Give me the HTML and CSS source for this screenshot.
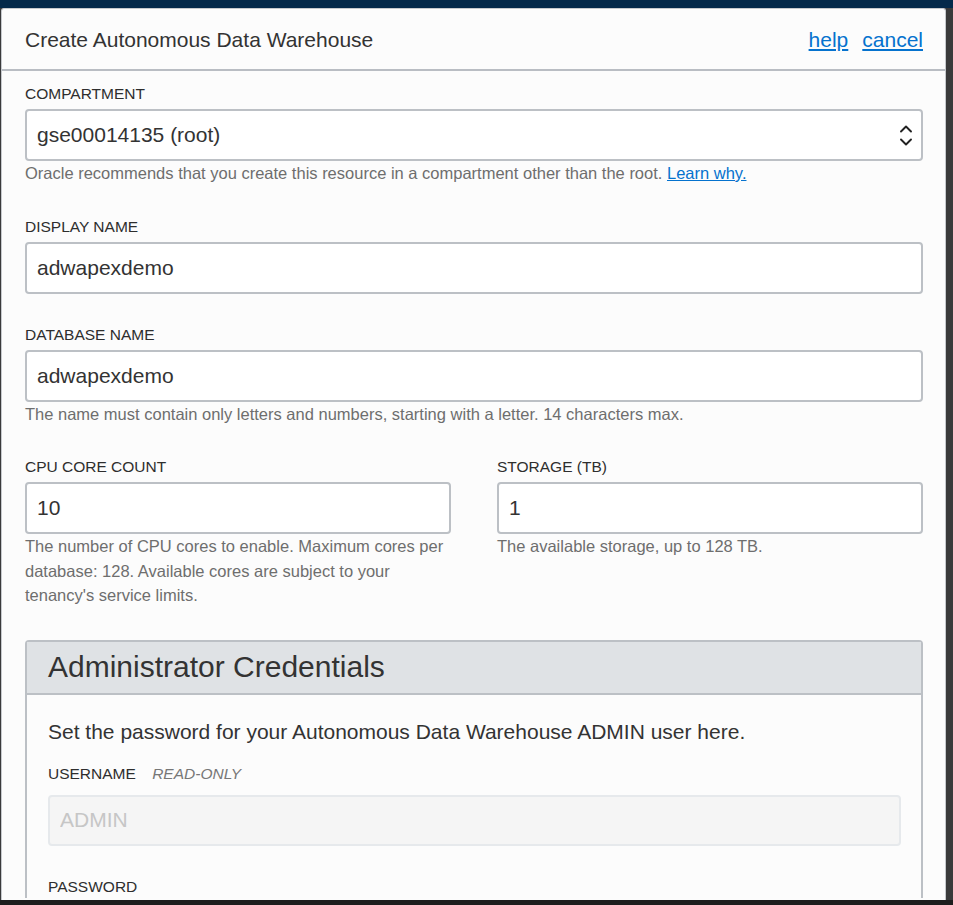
FILE: index.html
```html
<!DOCTYPE html>
<html lang="en">
<head>
<meta charset="utf-8">
<title>Create Autonomous Data Warehouse</title>
<link rel="stylesheet" href="styles.css">
</head>
<body>
<div class="dialog">
  <div class="dialog-header">
    <h1 class="dialog-title">Create Autonomous Data Warehouse</h1>
    <div class="header-links">
      <a href="#" class="link">help</a>
      <a href="#" class="link">cancel</a>
    </div>
  </div>
  <div class="dialog-body">
    <div class="field">
      <label class="label">COMPARTMENT</label>
      <div class="input select">
        <span>gse00014135 (root)</span>
        <svg class="chevrons" width="12" height="21" viewBox="0 0 12 21"><path d="M1 6.5 L6 1.5 L11 6.5 M1 14.5 L6 19.5 L11 14.5" fill="none" stroke="#222" stroke-width="1.9" stroke-linecap="round" stroke-linejoin="round"/></svg>
      </div>
      <div class="hint">Oracle recommends that you create this resource in a compartment other than the root. <a href="#" class="link">Learn why.</a></div>
    </div>
    <div class="field">
      <label class="label">DISPLAY NAME</label>
      <input class="input" type="text" value="adwapexdemo">
    </div>
    <div class="field">
      <label class="label">DATABASE NAME</label>
      <input class="input" type="text" value="adwapexdemo">
      <div class="hint">The name must contain only letters and numbers, starting with a letter. 14 characters max.</div>
    </div>
    <div class="row">
      <div class="col">
        <label class="label">CPU CORE COUNT</label>
        <input class="input" type="text" value="10">
        <div class="hint">The number of CPU cores to enable. Maximum cores per database: 128. Available cores are subject to your tenancy's service limits.</div>
      </div>
      <div class="col">
        <label class="label">STORAGE (TB)</label>
        <input class="input" type="text" value="1">
        <div class="hint">The available storage, up to 128 TB.</div>
      </div>
    </div>
    <div class="panel">
      <div class="panel-header">Administrator Credentials</div>
      <div class="panel-body">
        <p class="panel-intro">Set the password for your Autonomous Data Warehouse ADMIN user here.</p>
        <label class="label panel-label">USERNAME <em class="readonly">READ-ONLY</em></label>
        <input class="input input-disabled" type="text" value="ADMIN" disabled>
        <label class="label password-label">PASSWORD</label>
      </div>
    </div>
  </div>
</div>
</body>
</html>
```

FILE: styles.css
```css
html, body {
  margin: 0;
  padding: 0;
  height: 905px;
  overflow: hidden;
}

body {
  background: linear-gradient(#04294a 0, #04294a 8px, #3a3a3b 8px, #3a3a3b 900px, #1d1d1d 900px);
  font-family: "Liberation Sans", Arial, sans-serif;
  color: #333;
}

.dialog {
  box-sizing: border-box;
  margin: 8px 0 0 1px;
  width: 945px;
  height: 892px;
  overflow: hidden;
  background: #fcfcfc;
  border: 1px solid #c6c9cd;
  border-bottom: none;
  border-radius: 3px 3px 0 0;
}

.dialog-header {
  height: 62px;
  display: flex;
  align-items: center;
  justify-content: space-between;
  padding: 1px 22px 0 23px;
  box-sizing: border-box;
  border-bottom: 2px solid #b9bdc3;
}

.dialog-title {
  margin: 0;
  font-size: 21px;
  font-weight: normal;
  color: #333;
}

.header-links {
  display: flex;
  gap: 14px;
  font-size: 21px;
}

.link {
  color: #0572ce;
  text-decoration: underline;
}

.dialog-body {
  padding: 12px 22px 0 23px;
}

.field {
  margin-bottom: 30px;
}

.label {
  display: block;
  font-size: 15.5px;
  line-height: 22px;
  color: #2e2e2e;
  margin-bottom: 4px;
}

.input {
  display: flex;
  align-items: center;
  box-sizing: border-box;
  width: 100%;
  height: 52px;
  margin: 0;
  padding: 0 10px;
  border: 2px solid #bcc0c5;
  border-radius: 4px;
  background: #fff;
  font-family: inherit;
  font-size: 21px;
  color: #333;
  outline: none;
}

.select {
  justify-content: space-between;
  padding-right: 10px;
}

.chevrons {
  display: block;
  margin-right: -1px;
}

.hint {
  font-size: 16.5px;
  line-height: 24.5px;
  color: #6e6e6e;
}

.row {
  display: grid;
  grid-template-columns: 1fr 1fr;
  column-gap: 46px;
  margin-bottom: 32px;
}

.panel {
  border: 2px solid #bcc0c5;
  border-radius: 4px 4px 0 0;
  border-bottom: none;
}

.panel-header {
  height: 51px;
  display: flex;
  align-items: center;
  padding: 0 21px;
  background: #dfe2e5;
  border-bottom: 2px solid #bcc0c5;
  font-size: 30px;
  color: #333;
}

.panel-body {
  padding: 23px 20px 0 21px;
}

.panel-intro {
  margin: 0 0 17px;
  font-size: 21px;
  line-height: 28px;
  color: #333;
}

.panel-label {
  margin-bottom: 10px;
}

.readonly {
  margin-left: 12px;
  font-style: italic;
  color: #777;
}

.input-disabled {
  height: 51px;
  background: #f5f5f5;
  border-color: #e6e9ec;
  color: #c6c6c6;
  -webkit-text-fill-color: #c6c6c6;
}

.password-label {
  margin-top: 30px;
}
```
